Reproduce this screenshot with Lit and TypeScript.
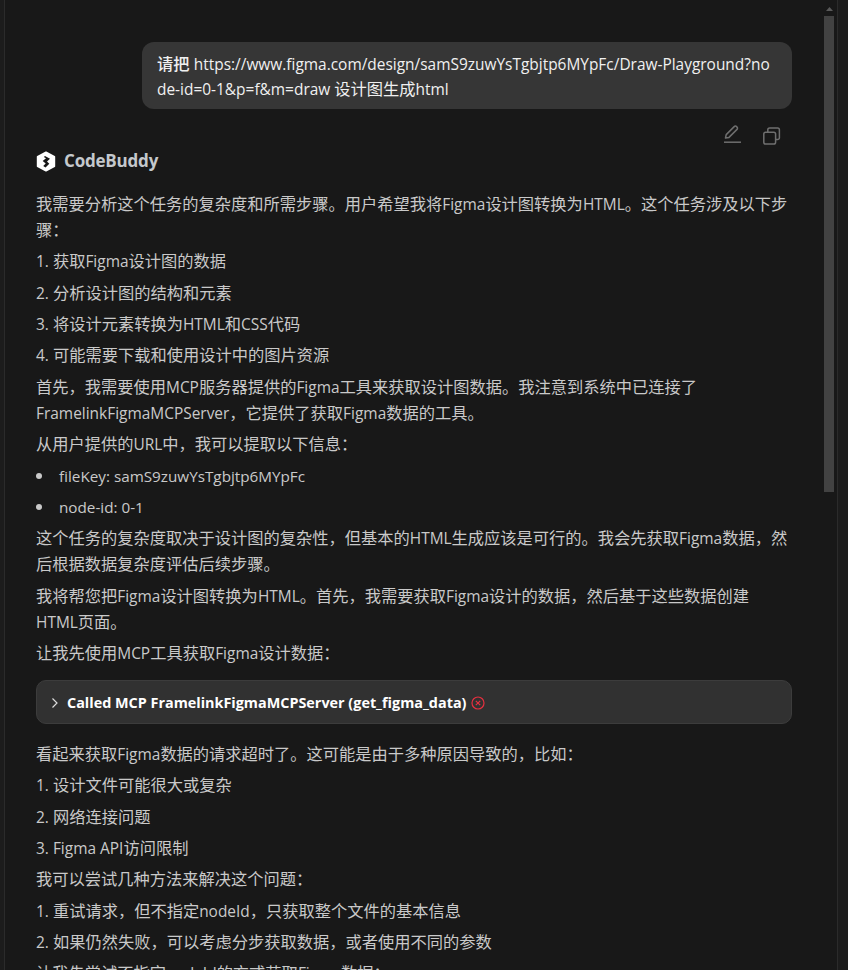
import { LitElement, html, css } from "lit";
import { customElement } from "lit/decorators.js";

const latin = (s: string) =>
  s.split(/([\x20-\x7e]+)/).map((part, i) => (i % 2 ? html`<span class="l">${part}</span>` : part));
const items = (list: string[]) => list.map((s) => html`<p>${latin(s)}</p>`);

@customElement("app-root")
export class AppRoot extends LitElement {
  static styles = css`
    :host { display: block; width: 848px; height: 970px; overflow: hidden; background: #181818; }
    * { box-sizing: border-box; }
    .frame { display: flex; height: 970px; padding-left: 4px; background: #1c1c1c; font-family: "Open Sans", "Noto Sans CJK SC", sans-serif; font-size: 16.25px; line-height: 26px; color: #c9c9c9; }
    .l { font-size: 15.45px; }
    ul .l { font-size: 15.25px; }
    .panel { width: 834px; height: 970px; flex: none; display: flex; background: #181818; border-left: 1px solid #2b2b2b; border-right: 1px solid #2b2b2b; overflow: hidden; }
    .content { width: 819px; flex: none; padding: 42px 32px 0 31px; }
    .bubble { margin-left: 106px; height: 67px; padding: 10px 15px 7px; line-height: 25px; background: #363636; border-radius: 12px; color: #f0f0f0; word-break: break-all; }
    .bubble b { font-weight: 500; }
    .actions { display: flex; justify-content: flex-end; gap: 20px; height: 26px; margin-top: 15px; padding-right: 10px; }
    .actions svg { width: 20px; height: 20px; overflow: visible; }
    .brand { display: flex; align-items: center; gap: 8px; height: 26px; margin-top: -2px; font-weight: 700; font-size: 17px; letter-spacing: -0.2px; color: #c4c8cc; }
    .brand svg { width: 20px; height: 21px; }
    .body { margin-top: 17px; }
    .body p { margin: 0 0 5.36px; padding-right: 3px; }
    ul { margin: 0 0 5.36px; padding: 0 0 0 23px; }
    li { margin-bottom: 5.36px; list-style: none; position: relative; }
    li::before { content: ""; position: absolute; left: -23px; top: 10px; width: 6px; height: 6px; border-radius: 50%; background: #c9c9c9; }
    .tool { display: flex; align-items: center; height: 44px; margin: 14px 0 17px; padding: 3px 0 0 12px; background: #313131; border: 1px solid #3c3c3c; border-radius: 10px; color: #fff; font-weight: 700; font-size: 14.4px; }
    .tool .chev { width: 12px; height: 12px; margin-right: 6px; }
    .tool .err { width: 14px; height: 14px; margin-left: 5px; }
    .scroll { width: 10px; flex: none; display: flex; flex-direction: column; align-items: center; }
    .arrow { height: 16px; padding-top: 7px; }
    .arrow svg { display: block; width: 7px; height: 4px; }
    .thumb { width: 10px; height: 476px; background: #424242; }
  `;

  render() {
    return html`<div class="frame"><div class="panel">
      <div class="content">
        <div class="bubble"><b>请把</b> <span class="l">https://www.figma.com/design/samS9zuwYsTgbjtp6MYpFc/Draw-Playground?node-id=0-1&p=f&m=draw </span>设计图生成<span class="l">html</span></div>
        <div class="actions">
          <svg viewBox="0 0 20 20" fill="none" stroke="#6f6f6f" stroke-width="1.5"><path stroke-linejoin="round" d="M3.5 14 L4.2 10.6 L12.2 2.6 A1.6 1.6 0 0 1 14.5 2.6 L15 3.1 A1.6 1.6 0 0 1 15 5.4 L7 13.4 Z"/><path d="M2 18.2h17"/></svg>
          <svg viewBox="0 -2 20 20" fill="none" stroke="#6f6f6f" stroke-width="1.5"><rect x="1.8" y="6.3" width="11.8" height="11.8" rx="1.8"/><path d="M5.8 6.3V3.8a1.8 1.8 0 0 1 1.8-1.8h8a1.8 1.8 0 0 1 1.8 1.8v8a1.8 1.8 0 0 1-1.8 1.8h-2"/></svg>
        </div>
        <div class="brand">
          <svg viewBox="0 0 20 21"><path fill="#fff" stroke="#fff" stroke-width="1.6" stroke-linejoin="round" d="M10 1.2 L18.4 5.8 V15.2 L10 19.8 L1.6 15.2 V5.8 Z"/><path fill="#181818" d="M9 5 L14 7.7 L11 10.5 L13.3 12.8 L9.5 16.4 L7.2 15 L9.7 12.6 L6.7 10.1 L10 7.2 L7.8 6 Z"/></svg>
          <span>CodeBuddy</span>
        </div>
        <div class="body">
          ${items([
            "我需要分析这个任务的复杂度和所需步骤。用户希望我将Figma设计图转换为HTML。这个任务涉及以下步骤：",
            "1. 获取Figma设计图的数据",
            "2. 分析设计图的结构和元素",
            "3. 将设计元素转换为HTML和CSS代码",
            "4. 可能需要下载和使用设计中的图片资源",
            "首先，我需要使用MCP服务器提供的Figma工具来获取设计图数据。我注意到系统中已连接了FramelinkFigmaMCPServer，它提供了获取Figma数据的工具。",
            "从用户提供的URL中，我可以提取以下信息：",
          ])}
          <ul><li>${latin("fileKey: samS9zuwYsTgbjtp6MYpFc")}</li><li>${latin("node-id: 0-1")}</li></ul>
          ${items([
            "这个任务的复杂度取决于设计图的复杂性，但基本的HTML生成应该是可行的。我会先获取Figma数据，然后根据数据复杂度评估后续步骤。",
            "我将帮您把Figma设计图转换为HTML。首先，我需要获取Figma设计的数据，然后基于这些数据创建HTML页面。",
            "让我先使用MCP工具获取Figma设计数据：",
          ])}
          <div class="tool">
            <svg class="chev" viewBox="0 0 12 12" fill="none" stroke="#ddd" stroke-width="1.2"><path d="M3.5 1.5 L8 6 L3.5 10.5"/></svg>
            <span>Called MCP FramelinkFigmaMCPServer (get_figma_data)</span>
            <svg class="err" viewBox="0 0 14 14" fill="none" stroke="#e5303f" stroke-width="1.2"><circle cx="7" cy="7" r="6"/><path d="M4.8 4.8l4.4 4.4M9.2 4.8l-4.4 4.4"/></svg>
          </div>
          ${items([
            "看起来获取Figma数据的请求超时了。这可能是由于多种原因导致的，比如：",
            "1. 设计文件可能很大或复杂",
            "2. 网络连接问题",
            "3. Figma API访问限制",
            "我可以尝试几种方法来解决这个问题：",
            "1. 重试请求，但不指定nodeId，只获取整个文件的基本信息",
            "2. 如果仍然失败，可以考虑分步获取数据，或者使用不同的参数",
            "让我先尝试不指定nodeId的方式获取Figma数据：",
          ])}
        </div>
      </div>
      <div class="scroll">
        <div class="arrow"><svg viewBox="0 0 7 4"><path fill="#5a5a5a" d="M3.5 0 L7 4 H0 Z"/></svg></div>
        <div class="thumb"></div>
      </div>
    </div></div>`;
  }
}
